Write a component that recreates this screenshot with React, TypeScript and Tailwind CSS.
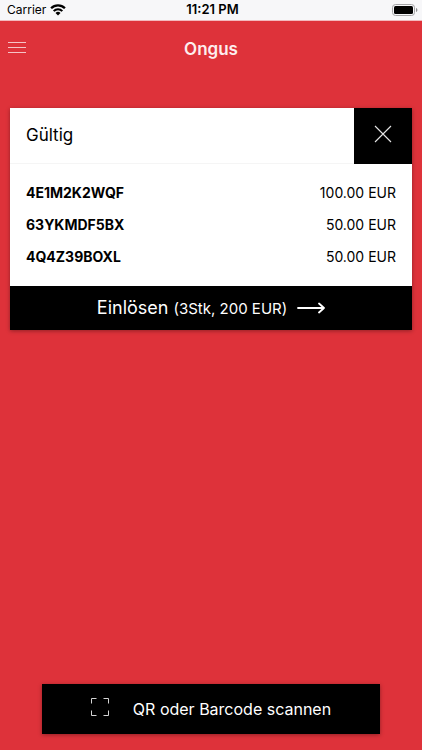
interface Voucher {
  code: string;
  amount: number;
}

const vouchers: Voucher[] = [
  { code: "4E1M2K2WQF", amount: 100 },
  { code: "63YKMDF5BX", amount: 50 },
  { code: "4Q4Z39BOXL", amount: 50 },
];

function WifiIcon() {
  return (
    <svg width="16" height="12" viewBox="0 0 16 12" fill="none" stroke="black" aria-hidden="true">
      <path d="M1.1 4.3a9.6 9.6 0 0 1 13.8 0" strokeWidth="2.3" />
      <path d="M3.7 7.1a5.9 5.9 0 0 1 8.6 0" strokeWidth="2.1" />
      <path d="M8 11.6 5.5 9a3.5 3.5 0 0 1 5 0Z" fill="black" stroke="none" />
    </svg>
  );
}

function BatteryIcon() {
  return (
    <svg width="26" height="12" viewBox="0 0 26 12" aria-hidden="true">
      <rect x="0.5" y="0.5" width="22" height="11" rx="3" fill="none" stroke="#a3a3a5" />
      <rect x="2" y="2" width="19" height="8" rx="1.5" fill="black" />
      <path d="M24 4v4c.8-.3 1.4-1.1 1.4-2s-.6-1.7-1.4-2Z" fill="#8e8e90" />
    </svg>
  );
}

function StatusBar() {
  return (
    <div className="grid grid-cols-3 items-center h-[21px] pl-[7px] pr-1 bg-[#f7f7f9] border-b border-[#f3b9bd] text-black text-xs">
      <div className="flex items-center gap-1">
        <span>Carrier</span>
        <WifiIcon />
      </div>
      <span className="text-center text-[13px] font-semibold">11:21 PM</span>
      <div className="flex justify-end">
        <BatteryIcon />
      </div>
    </div>
  );
}

function Header() {
  return (
    <header className="grid grid-cols-[1fr_auto_1fr] items-center h-[58px] px-2">
      <button className="justify-self-start mb-1" aria-label="Menu">
        <svg width="18" height="12" viewBox="0 0 18 12" stroke="#f6c3c6" aria-hidden="true">
          <path d="M0 .5h18M0 5.5h18M0 10.5h18" />
        </svg>
      </button>
      <h1 className="text-[17px] font-semibold text-[#fdeeee]">Ongus</h1>
    </header>
  );
}

function VoucherCard({ items }: { items: Voucher[] }) {
  const total = items.reduce((sum, v) => sum + v.amount, 0);

  return (
    <section className="bg-white text-black shadow-[0_1px_4px_rgba(0,0,0,0.35)]">
      <div className="flex h-14 border-b border-[#f5f5f5]">
        <h2 className="flex-1 flex items-center pl-4 text-[17px]">Gültig</h2>
        <button className="w-[58px] h-14 flex items-center justify-center bg-black" aria-label="Schließen">
          <svg width="18" height="18" viewBox="0 0 18 18" stroke="#e5e5e5" className="mb-1" aria-hidden="true">
            <path d="M1 1l16 16M17 1L1 17" strokeWidth="1.1" />
          </svg>
        </button>
      </div>

      <div className="px-4 py-[13px]">
        <table className="w-full text-sm">
          <tbody>
            {items.map((v) => (
              <tr key={v.code} className="h-8">
                <th scope="row" className="text-left font-bold">{v.code}</th>
                <td className="text-right">{v.amount.toFixed(2)} EUR</td>
              </tr>
            ))}
          </tbody>
        </table>
      </div>

      <button className="w-full h-11 flex items-center justify-center gap-[10px] bg-black text-white">
        <span className="text-lg">
          Einlösen <span className="text-[15px]">({items.length}Stk, {total} EUR)</span>
        </span>
        <svg width="28" height="12" viewBox="0 0 28 12" fill="none" stroke="white" strokeWidth="1.8" strokeLinecap="round" strokeLinejoin="round" aria-hidden="true">
          <path d="M1 6h26M22 1.5 27 6l-5 4.500" />
        </svg>
      </button>
    </section>
  );
}

function ScanButton() {
  return (
    <button className="w-full h-[50px] flex items-center justify-center gap-6 bg-black text-white shadow-[0_1px_4px_rgba(0,0,0,0.35)]">
      <svg width="18" height="18" viewBox="0 0 18 18" fill="none" stroke="#d4d4d4" className="mb-1" aria-hidden="true">
        <path d="M.5 5.5v-5h5M12.5.5h5v5M17.5 12.5v5h-5M5.5 17.5h-5v-5" />
      </svg>
      <span className="text-base">QR oder Barcode scannen</span>
    </button>
  );
}

export default function App() {
  return (
    <div className="min-h-screen flex flex-col bg-[#de323a] font-['Inter',sans-serif]">
      <StatusBar />
      <Header />
      <main className="flex-1 flex flex-col justify-between pt-[29px] pb-4">
        <div className="px-[10px]">
          <VoucherCard items={vouchers} />
        </div>
        <div className="px-[42px]">
          <ScanButton />
        </div>
      </main>
    </div>
  );
}
